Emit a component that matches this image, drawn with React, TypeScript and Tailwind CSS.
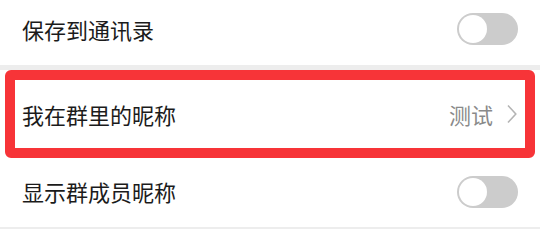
function Toggle() {
  return (
    <div className="flex h-[32px] w-[61px] items-center rounded-full bg-[#cccccc] p-[2px]">
      <div className="h-[28px] w-[28px] rounded-full bg-white" />
    </div>
  )
}

export default function App() {
  return (
    <div
      className="w-[540px] bg-white text-[22px] text-[#1b1b1b]"
      style={{ fontFamily: '"Noto Sans CJK SC", "Noto Sans", sans-serif' }}
    >
      {/* save to contacts */}
      <div className="flex h-[65px] items-center justify-between pb-[7px] pl-[22px] pr-[22px]">
        <span>保存到通讯录</span>
        <Toggle />
      </div>

      <div className="h-[5px] bg-[#ededed]" />

      {/* highlighted row */}
      <div className="px-[5px]">
        <div className="flex h-[88px] items-center justify-between rounded-[6px] border-[10px] border-[#f73438] pl-[7px] pr-[8px]">
          <span>我在群里的昵称</span>
          <div className="flex items-center gap-[14px] text-[#8a8a8a]">
            <span>测试</span>
            <svg width="10" height="20" viewBox="0 0 10 20" fill="none" className="text-[#b4b4b4]">
              <path d="M1 1.5 L8.8 10 L1 18.5" stroke="currentColor" strokeWidth="1.6" />
            </svg>
          </div>
        </div>
      </div>

      {/* show member nicknames */}
      <div className="flex h-[69px] items-center justify-between pb-[2px] pl-[22px] pr-[22px]">
        <span>显示群成员昵称</span>
        <Toggle />
      </div>
      <div className="h-[2px] bg-[#ededed]" />
    </div>
  )
}
